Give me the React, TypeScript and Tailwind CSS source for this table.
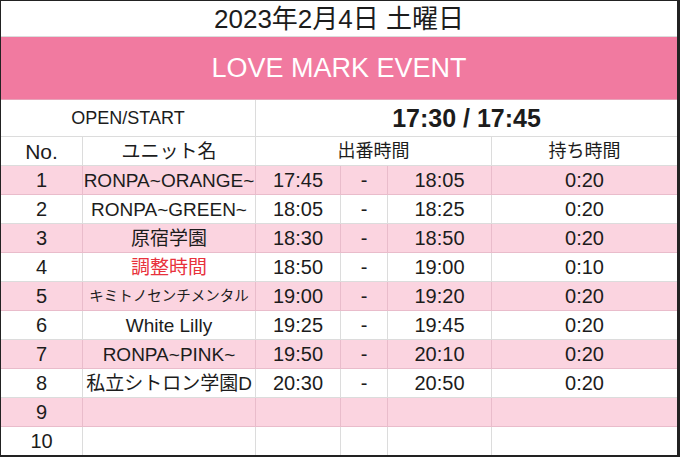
const rows = [
  { no: "1", name: "RONPA~ORANGE~", start: "17:45", end: "18:05", dur: "0:20" },
  { no: "2", name: "RONPA~GREEN~", start: "18:05", end: "18:25", dur: "0:20" },
  { no: "3", name: "原宿学園", start: "18:30", end: "18:50", dur: "0:20" },
  { no: "4", name: "調整時間", start: "18:50", end: "19:00", dur: "0:10", red: true },
  { no: "5", name: "キミトノセンチメンタル", start: "19:00", end: "19:20", dur: "0:20", small: true },
  { no: "6", name: "White Lilly", start: "19:25", end: "19:45", dur: "0:20" },
  { no: "7", name: "RONPA~PINK~", start: "19:50", end: "20:10", dur: "0:20" },
  { no: "8", name: "私立シトロン学園D", start: "20:30", end: "20:50", dur: "0:20" },
  { no: "9", name: "", start: "", end: "", dur: "" },
  { no: "10", name: "", start: "", end: "", dur: "" },
];

function Cell({ children, pink, last, className = "" }: { children?: React.ReactNode; pink?: boolean; last?: boolean; className?: string }) {
  return (
    <div
      className={`h-[29px] flex items-center justify-center whitespace-nowrap border-b ${last ? "" : "border-r"} ${
        pink ? "bg-[#fbd4e0] border-[#e9bccb]" : "bg-white border-[#dcdcdc]"
      } ${className}`}
    >
      {children}
    </div>
  );
}

export default function App() {
  return (
    <div
      className="w-[680px] h-[457px] bg-white border-t border-l border-r-[3px] border-b-[2px] border-[#222] text-[#1c1c1c] overflow-hidden"
      style={{ fontFamily: '"Liberation Sans", "Noto Sans CJK JP", sans-serif' }}
    >
      <div className="h-[36px] flex items-center justify-center text-[26px] leading-none border-b border-[#dcdcdc]">
        2023年2月4日 土曜日
      </div>
      <div className="h-[63px] bg-[#f17aa0] flex items-center justify-center text-white text-[27px] leading-none border-b border-[#e8a4ba]">
        LOVE MARK EVENT
      </div>
      <div className="grid grid-cols-[82px_173px_85px_47px_104px_185px] text-[20px] leading-none">
        <div className="col-span-2 h-[37px] flex items-center justify-center border-r border-b border-[#dcdcdc] text-[18px]">
          OPEN/START
        </div>
        <div className="col-span-4 h-[37px] flex items-center justify-center border-b border-[#dcdcdc] text-[25px] font-bold">
          17:30 / 17:45
        </div>

        <Cell className="text-[21px]">No.</Cell>
        <Cell className="text-[19px]">ユニット名</Cell>
        <div className="col-span-3 h-[29px] flex items-center justify-center border-r border-b border-[#dcdcdc] text-[18px]">
          出番時間
        </div>
        <Cell last className="text-[18px]">持ち時間</Cell>

        {rows.map((r, i) => {
          const pink = i % 2 === 0;
          return [
            <Cell key={`${r.no}a`} pink={pink}>{r.no}</Cell>,
            <Cell
              key={`${r.no}b`}
              pink={pink}
              className={`${r.red ? "text-[#e8323c]" : ""} ${r.small ? "text-[14.5px]" : "text-[19px]"}`}
            >
              {r.name}
            </Cell>,
            <Cell key={`${r.no}c`} pink={pink}>{r.start}</Cell>,
            <Cell key={`${r.no}d`} pink={pink}>{r.start ? "-" : ""}</Cell>,
            <Cell key={`${r.no}e`} pink={pink}>{r.end}</Cell>,
            <Cell key={`${r.no}f`} pink={pink} last>{r.dur}</Cell>,
          ];
        })}
      </div>
    </div>
  );
}
